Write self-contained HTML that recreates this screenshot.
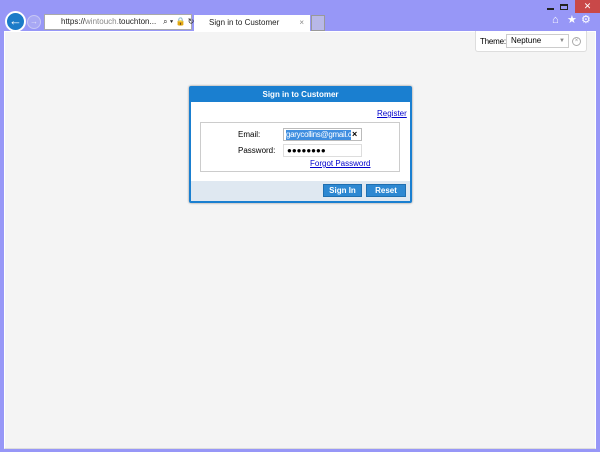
<!DOCTYPE html>
<html><head><style>
*{margin:0;padding:0;box-sizing:border-box}
body{width:600px;height:452px;background:#9797f7;position:relative;overflow:hidden;font-family:"Liberation Sans",Arial,sans-serif;font-size:8px}
.abs{position:absolute}
#content{left:4px;top:31px;width:592px;height:418px;background:#f4f4f4;border:1px solid #fff;border-bottom:1px solid #ddd}
</style></head><body>
<div class="abs" style="left:547px;top:8px;width:7px;height:2px;background:#222"></div>
<div class="abs" style="left:560px;top:4px;width:8px;height:6px;border:1px solid #222;border-top-width:2px"></div>
<div class="abs" style="left:575px;top:0;width:25px;height:13px;background:#c94848;color:#fff;font-size:9px;text-align:center;line-height:12px">✕</div>
<div class="abs" style="left:552px;top:14px;color:#fff;font-size:11px">⌂</div>
<div class="abs" style="left:567px;top:13px;color:#fff;font-size:11px">★</div>
<div class="abs" style="left:581px;top:13px;color:#fff;font-size:11px">⚙</div>
<div class="abs" style="left:5px;top:11px;width:21px;height:21px;border-radius:50%;background:#1b7bc8;border:2px solid #fff;color:#fff;font-size:13px;font-weight:bold;text-align:center;line-height:16px">←</div>
<div class="abs" style="left:27px;top:15px;width:14px;height:14px;border-radius:50%;border:1px solid #c6c6f4;background:#a8a8f4;color:#e0e0fa;font-size:8px;text-align:center;line-height:12px">→</div>
<div class="abs" style="left:44px;top:14px;width:148px;height:16px;background:#fff;border:1px solid #aaa;font-size:8px;line-height:14px;padding-left:16px;color:#222;white-space:nowrap">https://<span style="color:#888">wintouch.</span>touchton...<span style="margin-left:7px">⌕ ▾ 🔒 ↻</span></div>
<div class="abs" style="left:194px;top:15px;width:116px;height:16px;background:#fff;font-size:8px;line-height:16px;padding-left:15px;color:#222">Sign in to Customer<span style="position:absolute;right:6px;color:#888">×</span></div>
<div class="abs" style="left:311px;top:15px;width:14px;height:16px;background:#b8b8e8;border:1px solid #999"></div>
<div id="content" class="abs"></div>
<div class="abs" style="left:475px;top:31px;width:112px;height:21px;background:#fff;border:1px solid #ddd;border-top:none;border-radius:0 0 3px 3px"></div>
<div class="abs" style="left:480px;top:37px;font-size:8px;letter-spacing:-0.2px">Theme:</div>
<div class="abs" style="left:506px;top:34px;width:63px;height:14px;border:1px solid #ccc;background:#fff;font-size:8px;line-height:12px;padding-left:4px">Neptune<span style="position:absolute;right:3px;color:#888;font-size:6px">▼</span></div>
<div class="abs" style="left:572px;top:37px;width:9px;height:9px;border-radius:50%;border:1px solid #aaa;color:#999;font-size:6px;text-align:center;line-height:7px">×</div>
<div class="abs" style="left:189px;top:86px;width:223px;height:117px;background:#1a7fd0;border-radius:2px;box-shadow:0 0 2px #888"></div>
<div class="abs" style="left:189px;top:86px;width:223px;height:16px;color:#fff;font-weight:bold;text-align:center;line-height:17px;font-size:8px">Sign in to Customer</div>
<div class="abs" style="left:191px;top:102px;width:219px;height:99px;background:#fff"></div>
<div class="abs" style="left:191px;top:181px;width:219px;height:20px;background:#dfe8f1"></div>
<div class="abs" style="left:377px;top:109px;color:#00c;text-decoration:underline">Register</div>
<div class="abs" style="left:200px;top:122px;width:200px;height:50px;border:1px solid #ccc"></div>
<div class="abs" style="left:238px;top:130px">Email:</div>
<div class="abs" style="left:238px;top:146px">Password:</div>
<div class="abs" style="left:283px;top:128px;width:79px;height:13px;border:1px solid #bbb;background:#fff"></div>
<div class="abs" style="left:286px;top:130px;width:65px;height:10px;background:#3e8ee0;color:#fff;font-size:8px;line-height:10px;overflow:hidden;white-space:nowrap;letter-spacing:-0.3px">garycollins@gmail.co</div>
<div class="abs" style="left:352px;top:129px;font-size:9px;font-weight:bold">×</div>
<div class="abs" style="left:283px;top:144px;width:79px;height:13px;border:1px solid #ddd;background:#fff;font-size:8px;padding-left:3px;line-height:11px">●●●●●●●●</div>
<div class="abs" style="left:310px;top:159px;color:#00c;text-decoration:underline">Forgot Password</div>
<div class="abs" style="left:323px;top:184px;width:39px;height:13px;background:#2d88d2;border:1px solid #1f6fb0;color:#fff;font-weight:bold;text-align:center;line-height:11px">Sign In</div>
<div class="abs" style="left:366px;top:184px;width:40px;height:13px;background:#2d88d2;border:1px solid #1f6fb0;color:#fff;font-weight:bold;text-align:center;line-height:11px">Reset</div>
</body></html>
